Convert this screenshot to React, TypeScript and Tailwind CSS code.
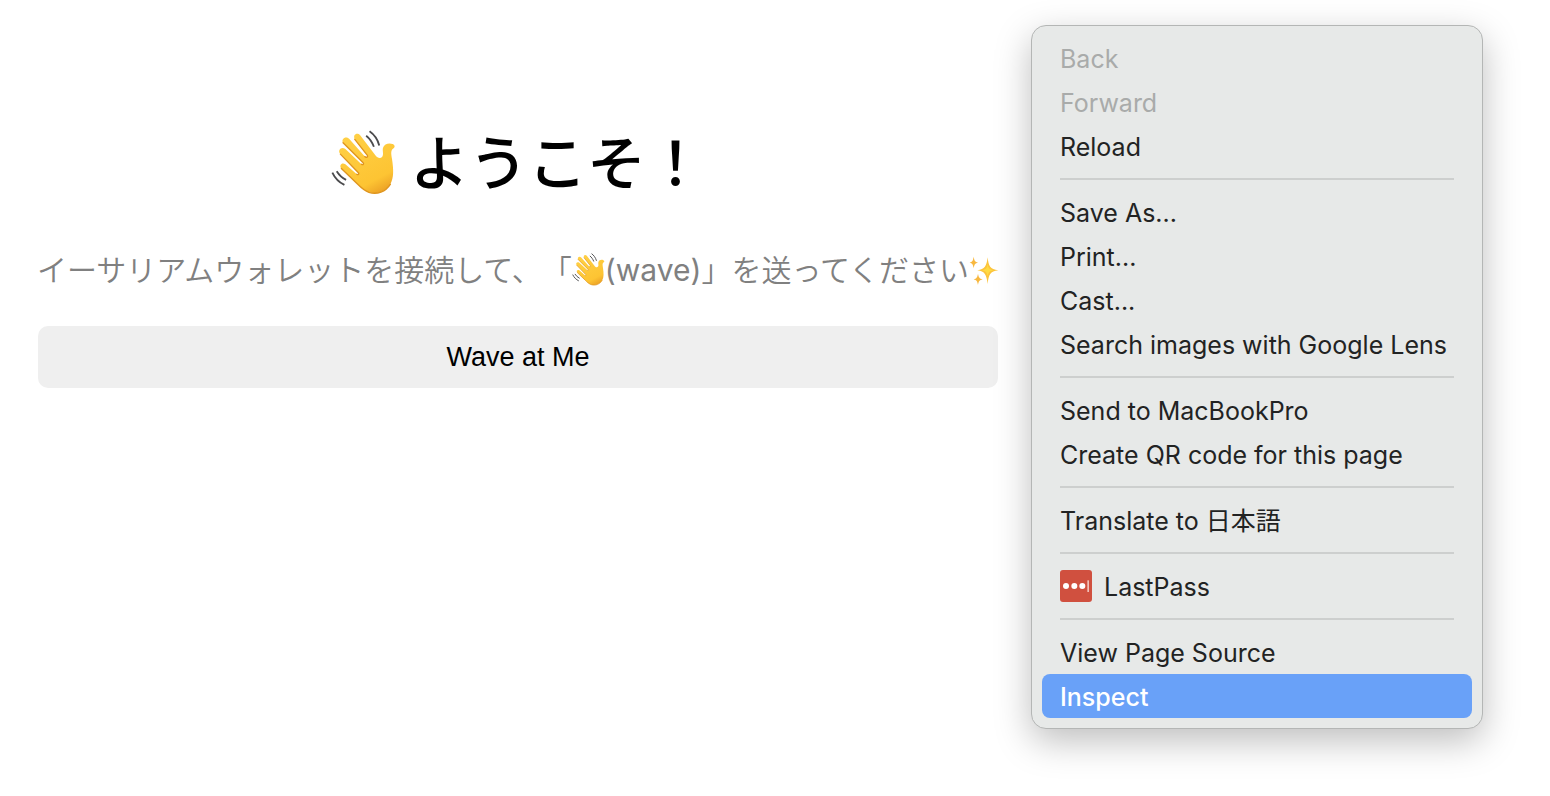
import React from "react";

type Item = { label: string; disabled?: boolean; active?: boolean; icon?: boolean };

const groups: Item[][] = [
  [{ label: "Back", disabled: true }, { label: "Forward", disabled: true }, { label: "Reload" }],
  [{ label: "Save As..." }, { label: "Print..." }, { label: "Cast..." }, { label: "Search images with Google Lens" }],
  [{ label: "Send to MacBookPro" }, { label: "Create QR code for this page" }],
  [{ label: "Translate to 日本語" }],
  [{ label: "LastPass", icon: true }],
  [{ label: "View Page Source" }, { label: "Inspect", active: true }],
];

function WavingHand({ className, id }: { className: string; id: string }) {
  return (
    <svg viewBox="36 44 194 194" className={className} role="img" aria-label="waving hand">
      <defs>
        <linearGradient id={id} x1="0.2" y1="0" x2="0.7" y2="1">
          <stop offset="0" stopColor="#ffd045" />
          <stop offset="0.8" stopColor="#fdc433" />
          <stop offset="1" stopColor="#eda426" />
        </linearGradient>
      </defs>
      <path
        d="M107 72C100 58 114 50 123 60L169 120C174 127 183 131 189 124C194 117 189 108 191 98C195 85 209 82 220 86C228 90 227 96 222 99C213 105 216 116 218 130C223 163 224 187 213 206C199 228 174 238 149 230C135 225 125 215 115 205L67 159C59 150 68 139 79 146L113 176C117 179 121 175 117 171L64 116C54 105 67 92 79 101L127 146C131 149 135 146 132 142L72 82C65 71 80 60 90 70L137 123C141 128 148 124 144 119Z"
        fill={`url(#${id})`}
      />
      <path
        d="M64 116L117 171C121 175 117 179 113 176M72 82L132 142C135 146 131 149 127 146M107 72L144 119C148 124 141 128 137 123M67 159L115 205C125 215 135 225 149 230C174 238 199 228 213 206"
        fill="none"
        stroke="#df951e"
        strokeWidth="4"
        strokeLinecap="round"
        strokeLinejoin="round"
      />
      <path
        d="M151 48C164 57 175 72 180 90M141 61C151 69 159 80 164 94M53 167C60 178 69 187 81 193M40 171C48 188 60 200 76 208"
        fill="none"
        stroke="#4b4b4d"
        strokeWidth="5.5"
      />
    </svg>
  );
}

function Sparkles() {
  return (
    <svg viewBox="0 0 88 90" className="inline-block h-[30px] w-[30px] align-[-5px]" role="img" aria-label="sparkles">
      <path d="M55 4C58 32 62 39 87 43C62 47 58 55 55 84C51 55 47 47 24 43C47 39 51 32 55 4Z" fill="#fcc43c" />
      <path d="M13 2C15 14 17 17 26 20C17 22 15 25 13 37C11 25 9 22 1 20C9 17 11 14 13 2Z" fill="#f8b83f" />
      <path d="M26 53C28 64 30 67 40 70C30 73 28 76 26 87C24 76 22 73 13 70C22 67 24 64 26 53Z" fill="#f8b83f" />
      <path d="M55 24C57 37 60 40 72 43C60 46 57 49 55 62C53 49 50 46 38 43C50 40 53 37 55 24Z" fill="#ffdb43" />
    </svg>
  );
}

function LastPassIcon() {
  return (
    <svg viewBox="0 0 96 96" className="h-8 w-8 shrink-0" aria-hidden="true">
      <rect width="96" height="96" rx="9" fill="#d0503f" />
      <circle cx="18" cy="48" r="9" fill="#fff" />
      <circle cx="43" cy="48" r="9" fill="#fff" />
      <circle cx="67" cy="48" r="9" fill="#fff" />
      <rect x="82" y="31" width="5" height="35" fill="#f0c1ba" />
    </svg>
  );
}

function MenuItem({ item }: { item: Item }) {
  const tone = item.active
    ? "bg-[#69a1f8] font-medium text-white"
    : item.disabled
      ? "text-[#a9abaa]"
      : "text-[#222323]";
  return (
    <button
      type="button"
      role="menuitem"
      disabled={item.disabled}
      className={`flex h-11 w-full items-center gap-3 whitespace-nowrap rounded-lg px-[18px] text-left ${tone}`}
    >
      {item.icon && <LastPassIcon />}
      <span className="pt-1">{item.label}</span>
    </button>
  );
}

export default function App() {
  return (
    <div className="relative min-h-screen bg-white">
      <main className="ml-[38px] flex max-w-[960px] flex-col pt-[116px] font-['Inter','Noto_Sans_CJK_JP',sans-serif]">
        <h1 className="flex items-center justify-center gap-3.5 text-[59px] leading-[88px] font-medium text-black">
          <WavingHand id="hand-large" className="h-[65px] w-[65px]" />
          <span className="pt-1">ようこそ！</span>
        </h1>
        <p className="mt-[38px] flex justify-center text-[30px] leading-[48px] font-[350] whitespace-nowrap text-[#808080] [text-spacing-trim:space-all]">
          <span>
            イーサリアムウォレットを接続して、「
            <WavingHand id="hand-small" className="inline-block h-[33px] w-[33px] align-[-5px]" />
            <span className="font-normal">(wave)</span>」を送ってください
            <Sparkles />
          </span>
        </p>
        <button
          type="button"
          className="mt-8 h-[62px] rounded-[10px] bg-[#efefef] font-['Liberation_Sans',sans-serif] text-[27px] text-black"
        >
          Wave at Me
        </button>
      </main>

      <div
        role="menu"
        aria-label="Context menu"
        className="absolute top-[25px] right-[67px] min-w-[452px] rounded-[15px] border border-[#b4b6b5] bg-[#e7e9e8] p-2.5 font-['Inter','Noto_Sans_CJK_JP',sans-serif] text-[25px] shadow-[0_12px_36px_rgba(0,0,0,0.26)]"
      >
        {groups.map((group, index) => (
          <React.Fragment key={group[0].label}>
            {index > 0 && <hr className="mx-[18px] my-2.5 border-t-2 border-[#cdcfce]" />}
            {group.map((item) => (
              <MenuItem key={item.label} item={item} />
            ))}
          </React.Fragment>
        ))}
      </div>
    </div>
  );
}
